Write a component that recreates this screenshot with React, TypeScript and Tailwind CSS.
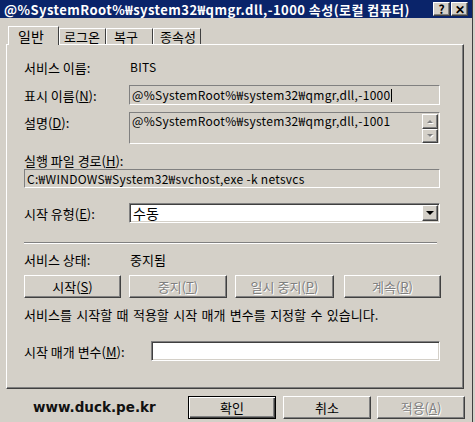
import React from "react";

const raised =
  "border border-t-white border-l-white border-r-[#404040] border-b-[#404040] shadow-[inset_-1px_-1px_0_#808080]";
const sunkenFlat = "border border-t-[#808080] border-l-[#808080] border-r-white border-b-white";
const sunkenDeep =
  "border border-t-[#808080] border-l-[#808080] border-r-white border-b-white shadow-[inset_1px_1px_0_#404040,inset_-1px_-1px_0_#d4d0c8]";
const disabledText = "text-[#808080] [text-shadow:1px_1px_0_#fff]";
const latin = "text-[12px] tracking-[0.3px]";

const Btn = ({ children, disabled, className = "" }: { children: React.ReactNode; disabled?: boolean; className?: string }) => {
  return (
    <div className={`${raised} h-[23px] flex items-center justify-center ${disabled ? disabledText : "text-black"} ${className}`}>
      {children}
    </div>
  );
};

const Label = ({ children }: { children: React.ReactNode }) => {
  return <div className="w-[105px] shrink-0">{children}</div>;
};

const App: React.FC = () => {
  return (
    <div
      className="w-[475px] h-[422px] bg-[#d4d0c8] overflow-hidden text-[13px] leading-none text-black"
      style={{ fontFamily: '"Noto Sans CJK KR", "Liberation Sans", sans-serif' }}
    >
      <div className="w-[473px] h-[422px] border-r border-[#404040] flex flex-col">
        {/* title bar */}
        <div className="h-[18px] bg-[#0a246a] flex items-center pl-[4px] pr-[4px]">
          <div className="flex-1 text-white font-bold text-[13px] whitespace-nowrap tracking-[0.45px]">
            @%SystemRoot%₩system32₩qmgr.dll,-1000 속성(로컬 컴퓨터)
          </div>
          <div className={`${raised} w-[17px] h-[14px] bg-[#d4d0c8] flex items-center justify-center font-bold text-[12px]`}>?</div>
          <div className={`${raised} ml-[1px] w-[17px] h-[14px] bg-[#d4d0c8] flex items-center justify-center font-bold text-[12px]`}>✕</div>
        </div>

        {/* tabs */}
        <div className="flex items-end pl-[8px] mt-[8px] h-[18px] relative z-10">
          <div className="w-[51px] h-[19px] border-t border-l border-white border-r border-r-[#404040] bg-[#d4d0c8] flex items-center pl-[9px] text-[14px] -mb-[1px]">
            일반
          </div>
          <div className="w-[47px] h-[16px] border-t border-l border-white border-r border-r-[#404040] flex items-center pl-[4px]">로그온</div>
          <div className="w-[47px] h-[16px] border-t border-l border-white border-r border-r-[#404040] flex items-center pl-[7px]">복구</div>
          <div className="w-[48px] h-[16px] border-t border-l border-white border-r border-r-[#404040] flex items-center pl-[6px]">종속성</div>
        </div>

        {/* panel */}
        <div className="ml-[6px] w-[458px] h-[345px] border-t border-l border-white border-r border-b border-r-[#404040] border-b-[#404040] shadow-[inset_-1px_-1px_0_#808080] pl-[17px] flex flex-col">
          <div className="mt-[12px] h-[20px] flex items-center">
            <Label>서비스 이름:</Label>
            <div className={`pl-[1px] ${latin}`}>BITS</div>
          </div>

          <div className="mt-[8px] h-[20px] flex items-center">
            <Label>
              표시 이름(<u>N</u>):
            </Label>
            <div className={`${sunkenFlat} ${latin} w-[311px] h-[20px] flex items-center pl-[2px]`}>
              @%SystemRoot%₩system32₩qmgr,dll,-1000
              <span className="w-[1px] h-[13px] bg-black" />
            </div>
          </div>

          <div className="mt-[7px] h-[32px] flex items-start">
            <div className="w-[105px] shrink-0 h-[20px] flex items-center">
              설명(<u>D</u>):
            </div>
            <div className={`${sunkenFlat} w-[311px] h-[32px] flex pl-[2px]`}>
              <div className={`flex-1 pt-[2px] ${latin}`}>@%SystemRoot%₩system32₩qmgr,dll,-1001</div>
              <div className="flex flex-col pt-[1px] pr-[1px]">
                <div className={`${raised} w-[16px] h-[15px] flex items-center justify-center`}>
                  <span className="w-0 h-0 border-l-[3px] border-r-[3px] border-b-[3px] border-l-transparent border-r-transparent border-b-[#808080] [filter:drop-shadow(1px_1px_0_#fff)]" />
                </div>
                <div className={`${raised} w-[16px] h-[15px] flex items-center justify-center`}>
                  <span className="w-0 h-0 border-l-[3px] border-r-[3px] border-t-[3px] border-l-transparent border-r-transparent border-t-[#808080] [filter:drop-shadow(1px_1px_0_#fff)]" />
                </div>
              </div>
            </div>
          </div>

          <div className="mt-[9px] h-[14px] flex items-center">
            실행 파일 경로(<u>H</u>):
          </div>

          <div className={`${sunkenFlat} ${latin} mt-[2px] w-[416px] h-[19px] flex items-center pl-[2px]`}>
            C:₩WINDOWS₩System32₩svchost,exe -k netsvcs
          </div>

          <div className="mt-[15px] h-[20px] flex items-center">
            <Label>
              시작 유형(<u>E</u>):
            </Label>
            <div className={`${sunkenDeep} bg-white w-[311px] h-[20px] flex items-center pl-[3px] pr-[1px]`}>
              <div className="flex-1 text-[14px]">수동</div>
              <div className={`${raised} bg-[#d4d0c8] w-[16px] h-[16px] flex items-center justify-center`}>
                <span className="w-0 h-0 border-l-[4px] border-r-[4px] border-t-[4px] border-l-transparent border-r-transparent border-t-black" />
              </div>
            </div>
          </div>

          <div className="mt-[19px] w-[413px] h-[2px] border-t border-t-[#808080] border-b border-b-white" />

          <div className="mt-[7px] h-[16px] flex items-center">
            <Label>서비스 상태:</Label>
            <div className="pl-[1px]">중지됨</div>
          </div>

          <div className="mt-[8px] flex">
            <Btn className="w-[97px]">
              시작(<u>S</u>)
            </Btn>
            <Btn disabled className="ml-[8px] w-[98px]">
              중지(<u>T</u>)
            </Btn>
            <Btn disabled className="ml-[8px] w-[99px]">
              일시 중지(<u>P</u>)
            </Btn>
            <Btn disabled className="ml-[10px] w-[97px]">
              계속(<u>R</u>)
            </Btn>
          </div>

          <div className="mt-[9px] h-[14px] flex items-center [word-spacing:1.5px]">
            서비스를 시작할 때 적용할 시작 매개 변수를 지정할 수 있습니다.
          </div>

          <div className="mt-[20px] h-[20px] flex items-center">
            <div className="w-[127px] shrink-0">
              시작 매개 변수(<u>M</u>):
            </div>
            <div className={`${sunkenDeep} bg-white w-[289px] h-[20px]`} />
          </div>
        </div>

        {/* footer */}
        <div className="mt-[7px] flex items-center h-[23px]">
          <div
            className="w-[188px] pl-[33px] font-bold text-[13.5px] text-[#111]"
            style={{ fontFamily: '"DejaVu Sans", Verdana, sans-serif' }}
          >
            www.duck.pe.kr
          </div>
          <div className="w-[88px] h-[23px] border border-black shadow-[inset_1px_1px_0_#fff,inset_-1px_-1px_0_#404040,inset_-2px_-2px_0_#808080] flex items-center justify-center">
            확인
          </div>
          <Btn className="ml-[7px] w-[88px]">취소</Btn>
          <Btn disabled className="ml-[6px] w-[88px]">
            적용(<u>A</u>)
          </Btn>
        </div>
      </div>
    </div>
  );
};

export default App;
